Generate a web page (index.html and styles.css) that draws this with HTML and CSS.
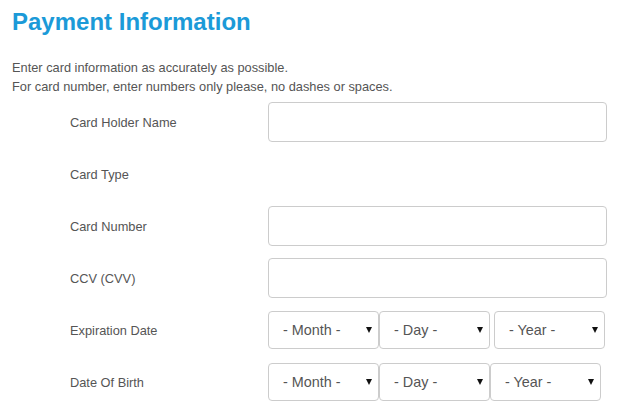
FILE: index.html
```html
<!DOCTYPE html>
<html>
<head>
<meta charset="utf-8">
<link rel="stylesheet" href="styles.css">
</head>
<body>
<div class="page">
  <h1 class="title">Payment Information</h1>
  <p class="intro">Enter card information as accurately as possible.<br>For card number, enter numbers only please, no dashes or spaces.</p>
  <div class="form">
    <div class="row">
      <label class="label">Card Holder Name</label>
      <input class="field" type="text">
    </div>
    <div class="row">
      <label class="label">Card Type</label>
    </div>
    <div class="row">
      <label class="label">Card Number</label>
      <input class="field" type="text">
    </div>
    <div class="row">
      <label class="label">CCV (CVV)</label>
      <input class="field" type="text">
    </div>
    <div class="row">
      <label class="label">Expiration Date</label>
      <div class="selects">
        <div class="sel"><select><option>- Month -</option></select></div>
        <div class="sel"><select><option>- Day -</option></select></div>
        <div class="sel sel-gap"><select><option>- Year -</option></select></div>
      </div>
    </div>
    <div class="row">
      <label class="label">Date Of Birth</label>
      <div class="selects">
        <div class="sel"><select><option>- Month -</option></select></div>
        <div class="sel"><select><option>- Day -</option></select></div>
        <div class="sel"><select><option>- Year -</option></select></div>
      </div>
    </div>
  </div>
</div>
</body>
</html>
```

FILE: styles.css
```css
html, body {
  margin: 0;
  padding: 0;
  background: #fff;
}
.page {
  padding: 8px 12px 0 12px;
  font-family: "Liberation Sans", Arial, sans-serif;
  color: #555;
}
.title {
  margin: 0;
  font-size: 24px;
  font-weight: bold;
  line-height: 28px;
  color: #1b9ad8;
}
.intro {
  margin: 22px 0 0 0;
  font-size: 12.8px;
  line-height: 19px;
}
.form {
  margin-top: 6px;
  display: flex;
  flex-direction: column;
}
.row {
  display: flex;
  align-items: center;
  height: 40px;
  margin-bottom: 12px;
}
.label {
  width: 256px;
  flex: none;
  padding-left: 58px;
  box-sizing: border-box;
  font-size: 12.8px;
  color: #555;
}
.field {
  width: 339px;
  height: 40px;
  box-sizing: border-box;
  border: 1px solid #ccc;
  border-radius: 4px;
  margin: 0;
  padding: 0 12px;
  font-family: inherit;
  font-size: 14px;
  color: #555;
  background: #fff;
}
.selects {
  display: flex;
  align-items: center;
}
.sel {
  position: relative;
  width: 111px;
  height: 38px;
}
.sel-gap {
  margin-left: 4px;
}
.sel select {
  -webkit-appearance: none;
  appearance: none;
  width: 111px;
  height: 38px;
  box-sizing: border-box;
  border: 1px solid #ccc;
  border-radius: 4px;
  margin: 0;
  padding: 0 0 0 14px;
  font-family: inherit;
  font-size: 14.4px;
  color: #555;
  background: #fff;
}
.sel::after {
  content: "";
  position: absolute;
  right: 7px;
  top: 16px;
  width: 0;
  height: 0;
  border-left: 3.5px solid transparent;
  border-right: 3.5px solid transparent;
  border-top: 6px solid #111;
  pointer-events: none;
}
```
